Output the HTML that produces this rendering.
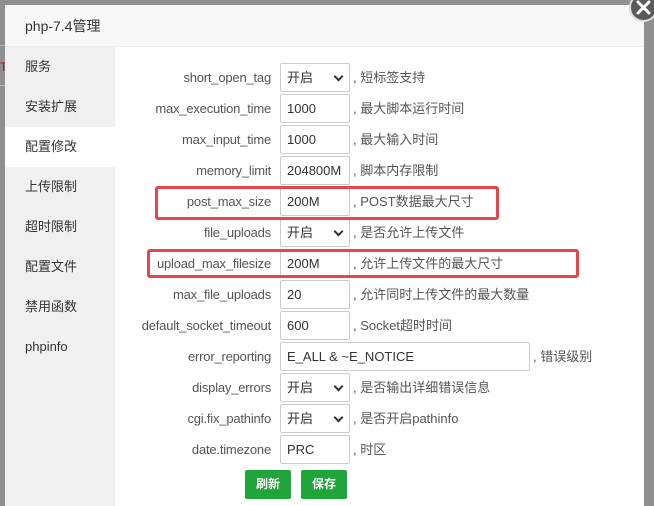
<!DOCTYPE html>
<html style="width:654px;height:506px;overflow:hidden"><head><meta charset="utf-8"><style>
*{box-sizing:border-box;margin:0;padding:0}
body{width:654px;height:506px;overflow:hidden;background:#8f8f8f;font-family:"Liberation Sans","Noto Sans CJK SC",sans-serif;font-size:13px;color:#333;position:relative}
.bgline{position:absolute;left:0;width:5px;height:1px;background:#b5b5b5}
.dlg{position:absolute;left:5px;top:5px;width:639px;height:501px;background:#fff;overflow:hidden}
.hd{height:42px;background:#f8f8f8;border-bottom:1px solid #eee;padding-left:20px;line-height:42px;font-size:14px;color:#333}
.nav{position:absolute;left:0;top:42px;width:110px;height:470px;background:#f0f0f0}
.nav div{height:40px;line-height:40px;padding-left:20px;font-size:13px;color:#333}
.nav .act{background:#fff}
.row{position:absolute;left:0;height:29px;width:640px}
.lb{position:absolute;right:374px;top:0;line-height:29px;text-align:right;white-space:nowrap;color:#555;letter-spacing:-0.2px}
.in{position:absolute;left:275px;top:0;width:70px;height:29px;border:1px solid #ccc;border-radius:2px;padding-left:6px;line-height:27px;color:#333;background:#fff}
.sel::after{content:"";position:absolute;right:7px;top:9px;width:5px;height:5px;border-right:2px solid #333;border-bottom:2px solid #333;transform:rotate(45deg)}
.ds{position:absolute;left:348px;top:0;line-height:29px;white-space:nowrap;color:#555}
.red{position:absolute;border:3px solid #e6454f;border-radius:3px}
.btn{position:absolute;top:465px;width:46px;height:29px;background:#20a53a;border-radius:2px;color:#fff;font-weight:bold;text-align:center;line-height:29px;font-size:12px}
.close{position:absolute;left:629px;top:-7px;width:29px;height:29px;border-radius:50%;background:#5a5a5a;border:2px solid #ddd}
</style></head><body>
<div class="bgline" style="top:45px"></div>
<div class="bgline" style="top:85px"></div>
<div style="position:absolute;left:0;top:60px;color:#a11;font-size:12px">T</div>
<div class="dlg">
<div class="hd">php-7.4管理</div>
<div class="nav">
<div>服务</div><div>安装扩展</div><div class="act">配置修改</div><div>上传限制</div><div>超时限制</div><div>配置文件</div><div>禁用函数</div><div>phpinfo</div>
</div>
<div class="row" style="top:58px"><span class="lb">short_open_tag</span><div class="in sel">开启</div><span class="ds">, 短标签支持</span></div>
<div class="row" style="top:89px"><span class="lb">max_execution_time</span><div class="in">1000</div><span class="ds">, 最大脚本运行时间</span></div>
<div class="row" style="top:120px"><span class="lb">max_input_time</span><div class="in">1000</div><span class="ds">, 最大输入时间</span></div>
<div class="row" style="top:151px"><span class="lb">memory_limit</span><div class="in">204800M</div><span class="ds">, 脚本内存限制</span></div>
<div class="row" style="top:182px"><span class="lb">post_max_size</span><div class="in">200M</div><span class="ds">, POST数据最大尺寸</span></div>
<div class="row" style="top:213px"><span class="lb">file_uploads</span><div class="in sel">开启</div><span class="ds">, 是否允许上传文件</span></div>
<div class="row" style="top:244px"><span class="lb">upload_max_filesize</span><div class="in">200M</div><span class="ds">, 允许上传文件的最大尺寸</span></div>
<div class="row" style="top:275px"><span class="lb">max_file_uploads</span><div class="in">20</div><span class="ds">, 允许同时上传文件的最大数量</span></div>
<div class="row" style="top:306px"><span class="lb">default_socket_timeout</span><div class="in">600</div><span class="ds">, Socket超时时间</span></div>
<div class="row" style="top:337px"><span class="lb">error_reporting</span><div class="in" style="width:250px">E_ALL &amp; ~E_NOTICE</div><span class="ds" style="left:528px">, 错误级别</span></div>
<div class="row" style="top:368px"><span class="lb">display_errors</span><div class="in sel">开启</div><span class="ds">, 是否输出详细错误信息</span></div>
<div class="row" style="top:399px"><span class="lb">cgi.fix_pathinfo</span><div class="in sel">开启</div><span class="ds">, 是否开启pathinfo</span></div>
<div class="row" style="top:430px"><span class="lb">date.timezone</span><div class="in">PRC</div><span class="ds">, 时区</span></div>
<div class="red" style="left:150px;top:181px;width:344px;height:34px"></div>
<div class="red" style="left:142px;top:244px;width:432px;height:29px"></div>
<div class="btn" style="left:240px">刷新</div>
<div class="btn" style="left:296px">保存</div>
</div>
<div class="close"><svg width="25" height="25" viewBox="0 0 25 25"><path d="M7 7L18 18M18 7L7 18" stroke="#fff" stroke-width="3" stroke-linecap="round"/></svg></div>
</body></html>
